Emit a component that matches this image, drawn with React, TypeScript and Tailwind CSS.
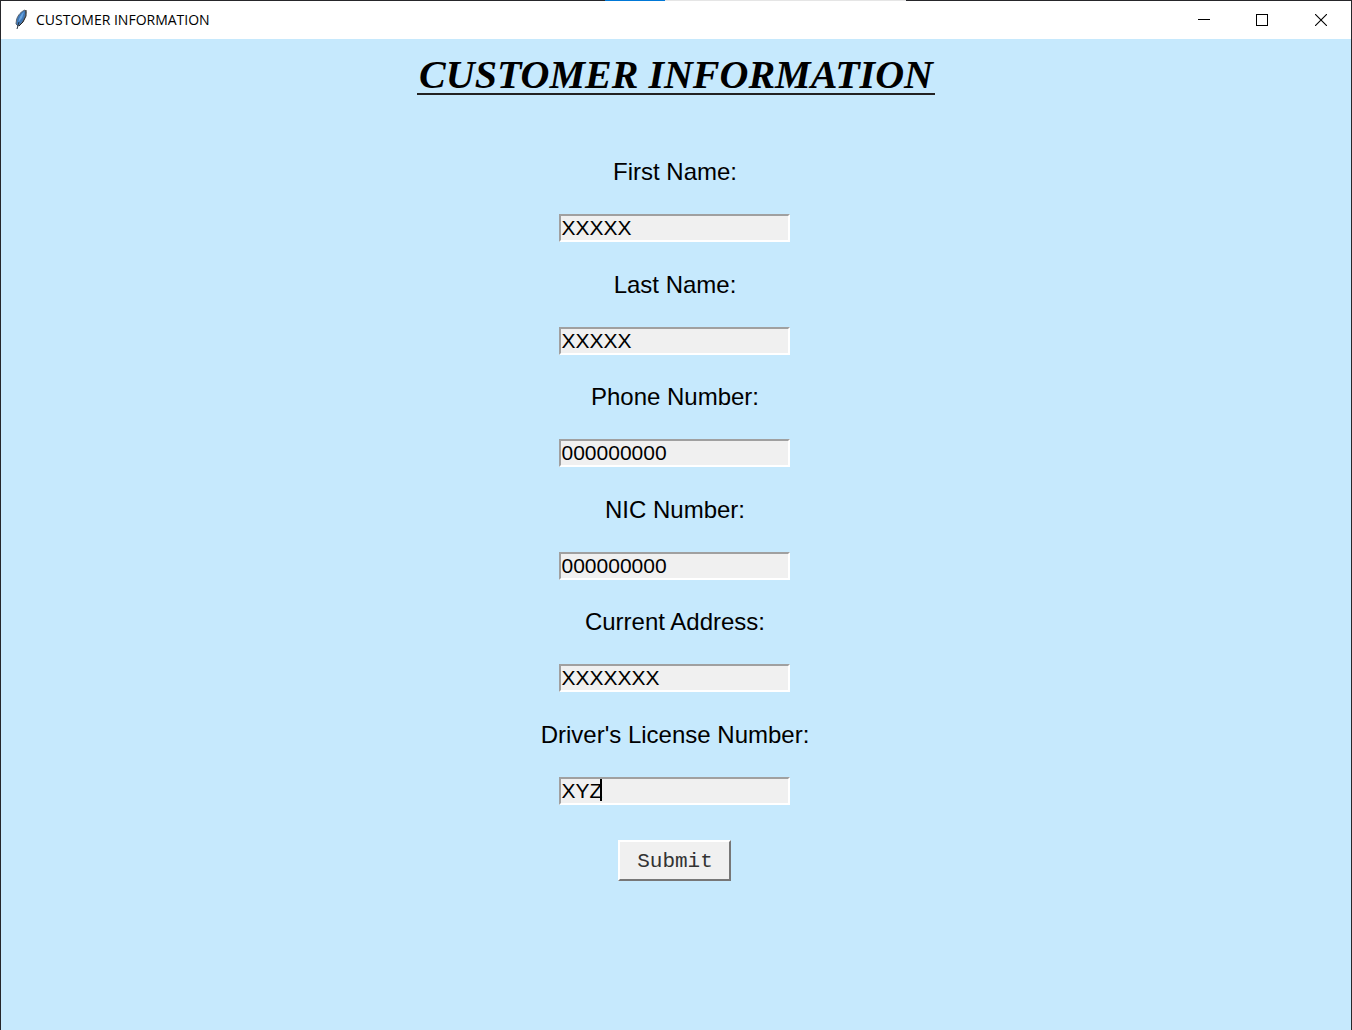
const fields = [
  { id: "first", label: "First Name:", value: "XXXXX" },
  { id: "last", label: "Last Name:", value: "XXXXX" },
  { id: "phone", label: "Phone Number:", value: "000000000" },
  { id: "nic", label: "NIC Number:", value: "000000000" },
  { id: "address", label: "Current Address:", value: "XXXXXXX" },
  { id: "license", label: "Driver's License Number:", value: "XYZ", caret: true },
];

function Feather() {
  return (
    <svg width="14" height="22" viewBox="0 0 14 22" aria-hidden="true">
      <path d="M11 1C8 2 3.500 6 2.500 11L2 15L4 17C8 15 11 10 12 3Z" fill="#3f78b8" stroke="#5b6570" strokeWidth="1" />
      <path d="M10 3C7 5 5 9 4.500 13L8 9Z" fill="#6aa5e0" />
      <path d="M12 1L12 7L9 13L5 17" fill="none" stroke="#222" strokeWidth="1" />
      <path d="M5 13L3 20" fill="none" stroke="#27323f" strokeWidth="1" />
    </svg>
  );
}

function TitleBar() {
  return (
    <header className="flex h-[38px] items-center bg-white pl-[13px]">
      <Feather />
      <span className="ml-2 grow pb-px font-['Open_Sans',sans-serif] text-sm text-black">
        CUSTOMER INFORMATION
      </span>
      <button aria-label="Minimize" className="flex h-full w-[58px] items-center justify-center">
        <svg width="12" height="12" viewBox="0 0 12 12" shapeRendering="crispEdges"><path d="M0 5.500H12" stroke="#000" /></svg>
      </button>
      <button aria-label="Maximize" className="flex h-full w-[58px] items-center justify-center">
        <svg width="12" height="12" viewBox="0 0 12 12" shapeRendering="crispEdges"><path d="M.5 .5H11.500V11.500H.5Z" fill="none" stroke="#000" /></svg>
      </button>
      <button aria-label="Close" className="flex h-full w-[60px] items-center justify-center">
        <svg width="12" height="12" viewBox="0 0 12 12"><path d="M0 0L12 12M12 0L0 12" stroke="#000" strokeWidth="1.100" /></svg>
      </button>
    </header>
  );
}

export default function App() {
  return (
    <div className="flex min-h-screen flex-col border-x border-[#26262a] bg-[#c6e9fd]">
      <div className="flex h-px justify-center bg-[#26262a] pl-[161px]">
        <div className="w-[60px] bg-[#0078d7]" />
        <div className="mr-[2px] w-[241px] bg-[#e5e5e5]" />
      </div>
      <TitleBar />
      <main className="flex flex-col items-center pt-[18px] font-['Liberation_Sans',sans-serif] text-black">
        <h1 className="border-b-2 border-[#222] px-[2px] font-['Liberation_Serif',serif] text-[40px] leading-9 font-bold italic">
          CUSTOMER INFORMATION
        </h1>
        <form className="mt-[63px] mr-[2px] flex flex-col items-center" onSubmit={(e) => e.preventDefault()}>
          <div className="grid min-h-[675px] auto-rows-fr">
            {fields.map((f) => (
              <div key={f.id} className="flex flex-col items-center">
                <label htmlFor={f.id} className="text-2xl leading-7">{f.label}</label>
                <div className="relative mt-7">
                  <input
                    id={f.id}
                    defaultValue={f.value}
                    className="block h-7 w-[231px] border-2 border-t-[#a0a0a0] border-r-white border-b-white border-l-[#a0a0a0] bg-[#f0f0f0] text-[21px] leading-6 outline-none"
                  />
                  {f.caret && <span className="absolute top-[2px] left-[41px] h-[22px] w-[2px] bg-black" />}
                </div>
              </div>
            ))}
          </div>
          <button className="mt-[7px] h-[41px] w-[113px] border-2 border-t-white border-r-[#777] border-b-[#777] border-l-white bg-[#f0f0f0] pt-[2px] font-['Liberation_Mono',monospace] text-[21px] leading-6 text-[#333]">
            Submit
          </button>
        </form>
      </main>
    </div>
  );
}
